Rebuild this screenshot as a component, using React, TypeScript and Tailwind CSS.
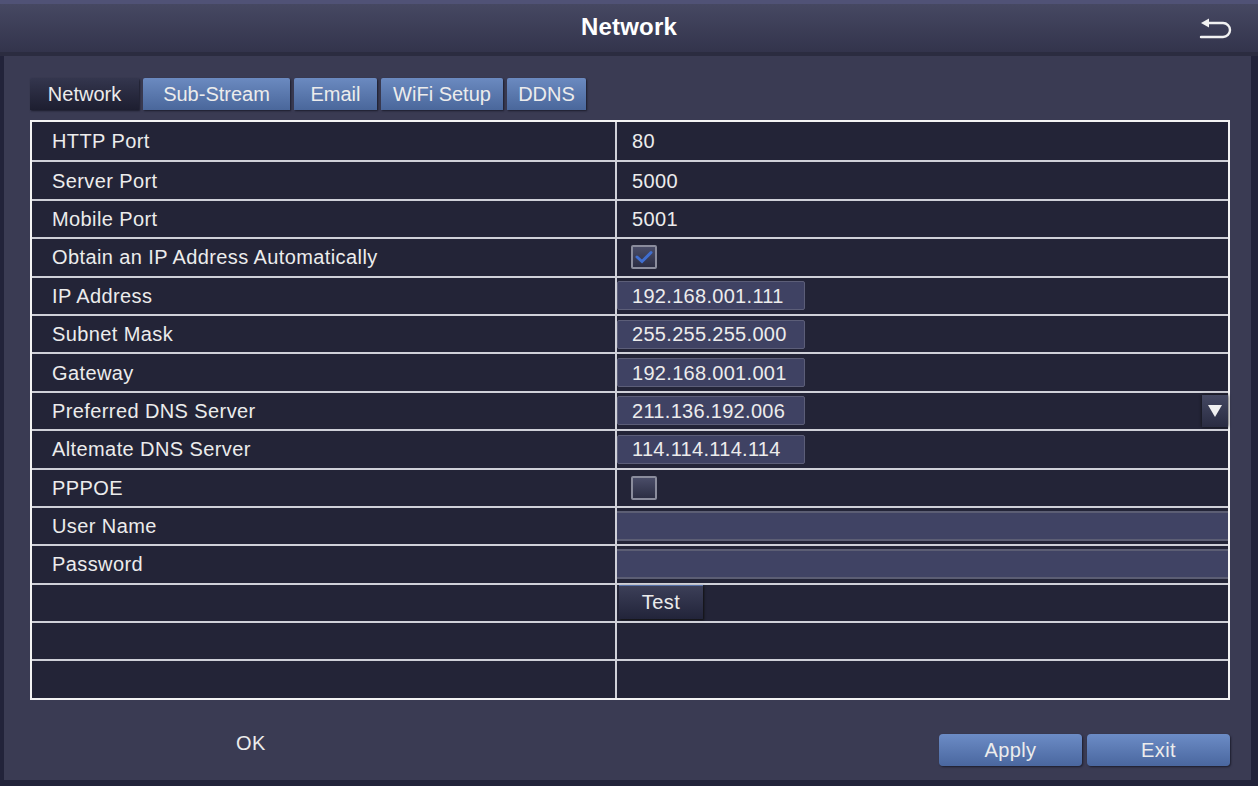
import React from "react"

const font = { fontFamily: '"Liberation Sans", Arial, sans-serif' }

type Row = {
  label: string
  kind: "text" | "check" | "input" | "wide" | "button" | "empty"
  value?: string
  checked?: boolean
  dropdown?: boolean
}

const rows: Row[] = [
  { label: "HTTP Port", kind: "text", value: "80" },
  { label: "Server Port", kind: "text", value: "5000" },
  { label: "Mobile Port", kind: "text", value: "5001" },
  { label: "Obtain an IP Address Automatically", kind: "check", checked: true },
  { label: "IP Address", kind: "input", value: "192.168.001.111" },
  { label: "Subnet Mask", kind: "input", value: "255.255.255.000" },
  { label: "Gateway", kind: "input", value: "192.168.001.001" },
  { label: "Preferred DNS Server", kind: "input", value: "211.136.192.006", dropdown: true },
  { label: "Altemate DNS Server", kind: "input", value: "114.114.114.114" },
  { label: "PPPOE", kind: "check", checked: false },
  { label: "User Name", kind: "wide" },
  { label: "Password", kind: "wide" },
  { label: "", kind: "button", value: "Test" },
  { label: "", kind: "empty" },
  { label: "", kind: "empty" },
]

const tabs = [
  { label: "Network", active: true, w: "w-[109px]" },
  { label: "Sub-Stream", active: false, w: "w-[147px]" },
  { label: "Email", active: false, w: "w-[83px]" },
  { label: "WiFi Setup", active: false, w: "w-[122px]" },
  { label: "DDNS", active: false, w: "w-[79px]" },
]

const BackIcon = () => (
  <svg width="36" height="26" viewBox="0 0 36 26" fill="none">
    <path
      d="M10 6 H25 A7 7 0 0 1 25 20 H3"
      stroke="#f2f2f2"
      strokeWidth="2.4"
      strokeLinecap="round"
    />
    <path d="M3 6 L11 1.5 L11 10.5 Z" fill="#f2f2f2" />
  </svg>
)

const Checkbox = ({ checked }: { checked?: boolean }) => (
  <div className="flex h-[24px] w-[26px] items-center justify-center rounded-[2px] border-2 border-[#8a8c9c] bg-gradient-to-b from-[#4a4d68] to-[#2c2e44]">
    {checked && (
      <svg width="18" height="14" viewBox="0 0 18 14">
        <path d="M2 7 L7 11.5 L16 2.5" stroke="#3f6ed0" strokeWidth="3" fill="none" strokeLinecap="round" />
      </svg>
    )}
  </div>
)

const Cell = ({ row }: { row: Row }) => {
  if (row.kind === "text") return <span className="pl-[15px]">{row.value}</span>
  if (row.kind === "check")
    return (
      <div className="pl-[14px]">
        <Checkbox checked={row.checked} />
      </div>
    )
  if (row.kind === "input")
    return (
      <div className="flex w-full items-center justify-between">
        <div className="flex h-[29px] w-[188px] items-center rounded-[2px] border border-[#5c5e78] bg-[#3f4263] pl-[14px] tracking-[0.3px]">
          {row.value}
        </div>
        {row.dropdown && (
          <div className="flex h-[32px] w-[26px] items-center justify-center bg-gradient-to-b from-[#444862] to-[#2a2c42] shadow-[0_0_3px_#111]">
            <svg width="16" height="14" viewBox="0 0 16 14">
              <path d="M1 1 H15 L8 13 Z" fill="#f0f0f0" />
            </svg>
          </div>
        )}
      </div>
    )
  if (row.kind === "wide")
    return <div className="h-[30px] w-full border-y-2 border-[#5c5e74] bg-[#404364]" />
  if (row.kind === "button")
    return (
      <div className="ml-[2px] flex h-[34px] w-[84px] items-center justify-center self-start border-t border-[#5670a8] bg-gradient-to-b from-[#3c3f58] to-[#22243a] shadow-[1px_1px_2px_#111]">
        {row.value}
      </div>
    )
  return null
}

export default function App() {
  return (
    <div className="flex h-[786px] w-[1258px] flex-col overflow-hidden bg-[#22233a] text-[20px] tracking-[0.4px] text-[#ececec]" style={font}>
      <div className="relative flex h-[52px] items-center justify-center border-t-[4px] border-[#505276] bg-gradient-to-b from-[#464862] to-[#33344c]">
        <span className="mt-[-2px] text-[24px] font-bold tracking-[0.2px] text-white">Network</span>
        <div className="absolute right-[24px] top-[13px]">
          <BackIcon />
        </div>
      </div>
      <div className="h-[4px] bg-[#2b2c40]" />
      <div className="mb-[6px] ml-[4px] mr-[7px] flex flex-1 flex-col bg-[#3a3b53] pl-[26px] pr-[21px]">
        <div className="mt-[22px] flex h-[32px] gap-[4px]">
          {tabs.map((t) => (
            <div
              key={t.label}
              className={`${t.w} flex items-center justify-center rounded-t-[2px] tracking-normal shadow-[1px_1px_2px_#1c1d2c] ${
                t.active
                  ? "bg-gradient-to-b from-[#34364e] to-[#1d1e30]"
                  : "bg-gradient-to-b from-[#6b8ac0] to-[#4a679b]"
              }`}
            >
              {t.label}
            </div>
          ))}
        </div>
        <div className="mt-[10px] flex flex-col border-2 border-[#f4f4f4] bg-[#232437]">
          {rows.map((r, i) => (
            <div
              key={i}
              className={`flex h-[38.4px] ${i > 0 ? "border-t-2 border-[#cfd0d8]" : ""}`}
            >
              <div className="flex w-[585px] items-center border-r-2 border-[#cfd0d8] pl-[20px]">
                {r.label}
              </div>
              <div className="flex flex-1 items-center">
                <Cell row={r} />
              </div>
            </div>
          ))}
        </div>
        <div className="flex flex-1 items-center justify-between">
          <span className="ml-[206px] mt-[6px]">OK</span>
          <div className="mt-[20px] flex gap-[5px]">
            {["Apply", "Exit"].map((b) => (
              <div
                key={b}
                className="flex h-[32px] w-[143px] items-center justify-center rounded-[4px] bg-gradient-to-b from-[#6c8cc6] to-[#4a679f] shadow-[1px_1px_2px_#1c1d2c]"
              >
                {b}
              </div>
            ))}
          </div>
        </div>
      </div>
    </div>
  )
}
